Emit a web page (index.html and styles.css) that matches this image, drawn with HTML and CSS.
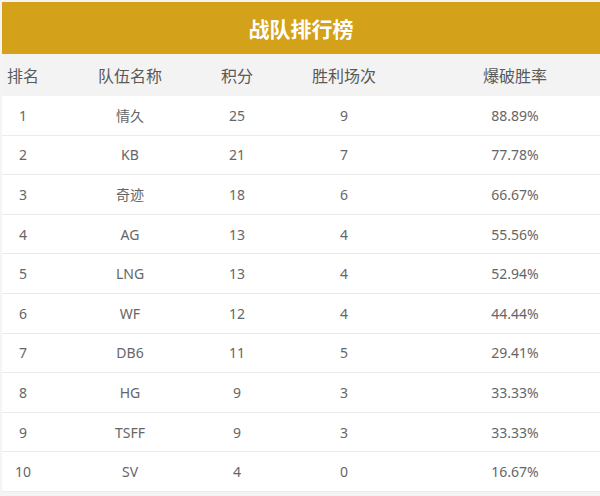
FILE: index.html
```html
<!DOCTYPE html>
<html lang="zh">
<head>
<meta charset="utf-8">
<title>战队排行榜</title>
<link rel="stylesheet" href="styles.css">
</head>
<body>
<div class="board">
  <div class="title">战队排行榜</div>
  <div class="row head">
    <div>排名</div><div>队伍名称</div><div>积分</div><div>胜利场次</div><div>爆破胜率</div>
  </div>
  <div class="row"><div>1</div><div>情久</div><div>25</div><div>9</div><div>88.89%</div></div>
  <div class="row"><div>2</div><div>KB</div><div>21</div><div>7</div><div>77.78%</div></div>
  <div class="row"><div>3</div><div>奇迹</div><div>18</div><div>6</div><div>66.67%</div></div>
  <div class="row"><div>4</div><div>AG</div><div>13</div><div>4</div><div>55.56%</div></div>
  <div class="row"><div>5</div><div>LNG</div><div>13</div><div>4</div><div>52.94%</div></div>
  <div class="row"><div>6</div><div>WF</div><div>12</div><div>4</div><div>44.44%</div></div>
  <div class="row"><div>7</div><div>DB6</div><div>11</div><div>5</div><div>29.41%</div></div>
  <div class="row"><div>8</div><div>HG</div><div>9</div><div>3</div><div>33.33%</div></div>
  <div class="row"><div>9</div><div>TSFF</div><div>9</div><div>3</div><div>33.33%</div></div>
  <div class="row"><div>10</div><div>SV</div><div>4</div><div>0</div><div>16.67%</div></div>
</div>
</body>
</html>
```
FILE: styles.css
```css
html, body {
  margin: 0;
  padding: 0;
  background: #f4f4f4;
}
body {
  font-family: "Noto Sans", "Noto Sans CJK SC", sans-serif;
  color: #666666;
}
.board {
  margin: 2px 0 0 2px;
  background: #ffffff;
}
.title {
  height: 52px;
  line-height: 52px;
  background: #d4a11b;
  color: #ffffff;
  font-size: 21px;
  font-weight: bold;
  text-align: center;
  font-family: "Noto Sans CJK SC", sans-serif;
}
.row {
  display: grid;
  grid-template-columns: 42px 172px 42px 172px 1fr;
  align-items: center;
  height: 39.6px;
  box-sizing: border-box;
  border-bottom: 1px solid #ebebeb;
  font-size: 14px;
  text-align: center;
  background: #ffffff;
}
.row.head {
  height: 42px;
  background: #f3f3f3;
  border-bottom: none;
  font-size: 16px;
  color: #595959;
}
```
